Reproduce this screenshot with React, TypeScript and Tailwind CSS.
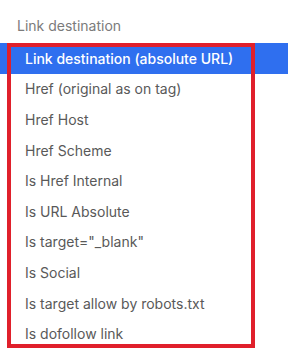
import React from 'react';

const options = [
  'Link destination (absolute URL)',
  'Href (original as on tag)',
  'Href Host',
  'Href Scheme',
  'Is Href Internal',
  'Is URL Absolute',
  'Is target="_blank"',
  'Is Social',
  'Is target allow by robots.txt',
  'Is dofollow link',
];

export default function App() {
  const selected = 0;

  return (
    <div className="relative h-[352px] w-[288px] overflow-hidden bg-white font-['Inter',sans-serif]">
      <div className="flex h-[43px] items-center px-[17px] pt-[8px] text-[14px] text-[#7b7b7b]">
        Link destination
      </div>

      <ul>
        {options.map((opt, i) => (
          <li
            key={opt}
            className={
              i === selected
                ? 'flex h-[30.6px] items-center bg-[#2f6fef] px-[25px] text-[14px] font-medium text-white'
                : 'flex h-[30.6px] items-center px-[25px] text-[14px] text-[#595959]'
            }
          >
            {opt}
          </li>
        ))}
      </ul>

      {/* highlight annotation */}
      <div className="pointer-events-none absolute left-[7px] top-[43px] h-[305px] w-[248px] border-[4px] border-[#e0202b]" />
    </div>
  );
}
